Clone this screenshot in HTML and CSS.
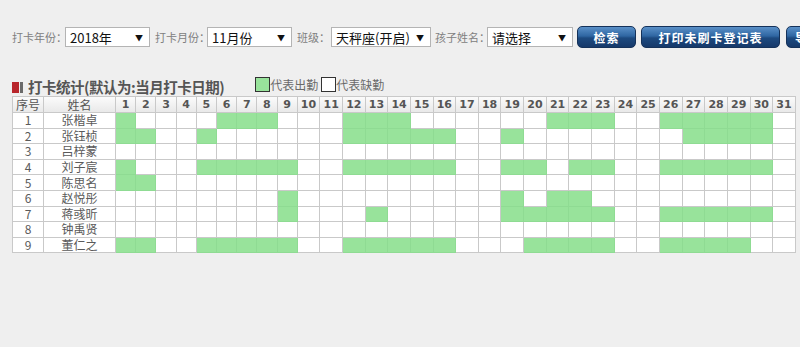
FILE: index.html
```html
<!DOCTYPE html>
<html lang="zh-CN">
<head>
<meta charset="utf-8">
<title>打卡统计</title>
<link rel="stylesheet" href="styles.css">
</head>
<body>
<div class="page">
  <div class="toolbar">
    <span class="lbl l1">打卡年份：</span>
    <div class="sel s1"><span>2018年</span><span class="arr">▼</span></div>
    <span class="lbl l2">打卡月份：</span>
    <div class="sel s2"><span>11月份</span><span class="arr">▼</span></div>
    <span class="lbl l3">班级：</span>
    <div class="sel s3"><span>天秤座(开启)</span><span class="arr">▼</span></div>
    <span class="lbl l4">孩子姓名：</span>
    <div class="sel s4"><span>请选择</span><span class="arr">▼</span></div>
    <button class="btn b1">检索</button>
    <button class="btn b2">打印未刷卡登记表</button>
    <button class="btn b3">导出</button>
  </div>

  <div class="titlebar">
    <span class="ico"><span class="r"></span><span class="d"></span></span>
    <span class="title">打卡统计(默认为:当月打卡日期)</span>
    <span class="legend">
      <span class="box on"></span><span class="lg">代表出勤</span>
      <span class="box off"></span><span class="lg">代表缺勤</span>
    </span>
  </div>

  <table class="grid">
    <colgroup>
      <col class="c-no"><col class="c-name">
      <col class="c-a"><col class="c-a"><col class="c-a"><col class="c-a"><col class="c-a"><col class="c-a"><col class="c-a"><col class="c-a"><col class="c-a">
      <col class="c-b"><col class="c-b"><col class="c-b"><col class="c-b"><col class="c-b"><col class="c-b"><col class="c-b"><col class="c-b"><col class="c-b"><col class="c-b"><col class="c-b"><col class="c-b"><col class="c-b"><col class="c-b"><col class="c-b"><col class="c-b"><col class="c-b"><col class="c-b"><col class="c-b"><col class="c-b"><col class="c-b"><col class="c-b">
    </colgroup>
    <thead>
      <tr>
        <th class="hn">序号</th><th class="hn">姓名</th>
        <th>1</th><th>2</th><th>3</th><th>4</th><th>5</th><th>6</th><th>7</th><th>8</th><th>9</th><th>10</th><th>11</th><th>12</th><th>13</th><th>14</th><th>15</th><th>16</th><th>17</th><th>18</th><th>19</th><th>20</th><th>21</th><th>22</th><th>23</th><th>24</th><th>25</th><th>26</th><th>27</th><th>28</th><th>29</th><th>30</th><th>31</th>
      </tr>
    </thead>
    <tbody>
      <tr><td>1</td><td>张楷卓</td>
        <td class="g"></td><td></td><td></td><td></td><td></td><td class="g"></td><td class="g"></td><td class="g"></td><td></td><td></td>
        <td></td><td class="g"></td><td class="g"></td><td class="g"></td><td></td><td></td><td></td><td></td><td></td><td></td>
        <td class="g"></td><td class="g"></td><td class="g"></td><td></td><td></td><td class="g"></td><td class="g"></td><td class="g"></td><td class="g"></td><td class="g"></td>
        <td></td></tr>
      <tr><td>2</td><td>张钰桢</td>
        <td class="g"></td><td class="g"></td><td></td><td></td><td class="g"></td><td></td><td></td><td></td><td></td><td></td>
        <td></td><td class="g"></td><td class="g"></td><td class="g"></td><td class="g"></td><td class="g"></td><td></td><td></td><td class="g"></td><td></td>
        <td></td><td></td><td></td><td></td><td></td><td></td><td class="g"></td><td class="g"></td><td class="g"></td><td class="g"></td>
        <td></td></tr>
      <tr><td>3</td><td>吕梓蒙</td>
        <td></td><td></td><td></td><td></td><td></td><td></td><td></td><td></td><td></td><td></td>
        <td></td><td></td><td></td><td></td><td></td><td></td><td></td><td></td><td></td><td></td>
        <td></td><td></td><td></td><td></td><td></td><td></td><td></td><td></td><td></td><td></td>
        <td></td></tr>
      <tr><td>4</td><td>刘子宸</td>
        <td class="g"></td><td></td><td></td><td></td><td class="g"></td><td class="g"></td><td class="g"></td><td class="g"></td><td class="g"></td><td></td>
        <td></td><td class="g"></td><td class="g"></td><td class="g"></td><td class="g"></td><td class="g"></td><td></td><td></td><td class="g"></td><td class="g"></td>
        <td></td><td class="g"></td><td class="g"></td><td></td><td></td><td class="g"></td><td class="g"></td><td class="g"></td><td class="g"></td><td class="g"></td>
        <td></td></tr>
      <tr><td>5</td><td>陈思名</td>
        <td class="g"></td><td class="g"></td><td></td><td></td><td></td><td></td><td></td><td></td><td></td><td></td>
        <td></td><td></td><td></td><td></td><td></td><td></td><td></td><td></td><td></td><td></td>
        <td></td><td></td><td></td><td></td><td></td><td></td><td></td><td></td><td></td><td></td>
        <td></td></tr>
      <tr><td>6</td><td>赵悦彤</td>
        <td></td><td></td><td></td><td></td><td></td><td></td><td></td><td></td><td class="g"></td><td></td>
        <td></td><td></td><td></td><td></td><td></td><td></td><td></td><td></td><td class="g"></td><td></td>
        <td class="g"></td><td class="g"></td><td></td><td></td><td></td><td></td><td></td><td></td><td></td><td></td>
        <td></td></tr>
      <tr><td>7</td><td>蒋彧昕</td>
        <td></td><td></td><td></td><td></td><td></td><td></td><td></td><td></td><td class="g"></td><td></td>
        <td></td><td></td><td class="g"></td><td></td><td></td><td></td><td></td><td></td><td class="g"></td><td class="g"></td>
        <td class="g"></td><td class="g"></td><td class="g"></td><td></td><td></td><td class="g"></td><td class="g"></td><td class="g"></td><td class="g"></td><td class="g"></td>
        <td></td></tr>
      <tr><td>8</td><td>钟禹贤</td>
        <td></td><td></td><td></td><td></td><td></td><td></td><td></td><td></td><td></td><td></td>
        <td></td><td></td><td></td><td></td><td></td><td></td><td></td><td></td><td></td><td></td>
        <td></td><td></td><td></td><td></td><td></td><td></td><td></td><td></td><td></td><td></td>
        <td></td></tr>
      <tr><td>9</td><td>董仁之</td>
        <td class="g"></td><td class="g"></td><td></td><td></td><td class="g"></td><td class="g"></td><td class="g"></td><td class="g"></td><td class="g"></td><td></td>
        <td></td><td class="g"></td><td class="g"></td><td class="g"></td><td class="g"></td><td class="g"></td><td></td><td></td><td></td><td class="g"></td>
        <td class="g"></td><td class="g"></td><td class="g"></td><td></td><td></td><td class="g"></td><td class="g"></td><td class="g"></td><td class="g"></td><td></td>
        <td></td></tr>
    </tbody>
  </table>
</div>
</body>
</html>
```
FILE: styles.css
```css
* { box-sizing: border-box; }

body {
  margin: 0;
  background: #efefef;
  font-family: "Noto Sans CJK SC", "Microsoft YaHei", sans-serif;
  color: #555;
  overflow: hidden;
}

.page {
  padding-left: 12px;
}

/* toolbar */
.toolbar {
  display: flex;
  align-items: center;
  height: 22px;
  margin-top: 26px;
  width: 788px;
  overflow: hidden;
  white-space: nowrap;
}

.lbl {
  flex: none;
  font-size: 11px;
  color: #808080;
}
.l1 { width: 53px; }
.l2 { width: 52px; }
.l3 { width: 34px; }
.l4 { width: 52px; }

.sel {
  flex: none;
  display: flex;
  align-items: center;
  justify-content: space-between;
  height: 20px;
  padding: 0 6px 0 4px;
  margin-right: 5px;
  background: #fff;
  border: 1px solid #b4b4b4;
  font-size: 13px;
  color: #111;
}
.sel .arr { font-size: 8px; color: #111; }
.s1 { width: 85px; }
.s2 { width: 85px; }
.s3 { width: 100px; margin-right: 4px; }
.s4 { width: 86px; margin-right: 4px; }

.btn {
  flex: none;
  height: 22px;
  padding: 0;
  border: 1px solid #15325a;
  border-radius: 5px;
  background: linear-gradient(#5a90c8 0%, #2f66a2 45%, #1d4a80 55%, #16396a 100%);
  color: #fff;
  font-family: "Noto Sans CJK SC", sans-serif;
  font-size: 12px;
  font-weight: bold;
  letter-spacing: 1px;
  margin-right: 5px;
}
.b1 { width: 59px; }
.b2 { width: 139px; margin-right: 6px; }
.b3 { width: 60px; text-align: left; padding-left: 8px; }

/* title */
.titlebar {
  display: flex;
  align-items: center;
  height: 20px;
  margin-top: 28px;
}
.ico {
  display: flex;
  gap: 1px;
  margin-top: 3px;
}
.ico .r { width: 7px; height: 11px; background: #b8262c; }
.ico .d { width: 3px; height: 11px; background: #6a6a6a; }

.title {
  margin-left: 5px;
  font-size: 14.5px;
  font-weight: bold;
  color: #555;
  letter-spacing: -0.5px;
}

.legend {
  display: flex;
  align-items: center;
  margin-left: 31px;
  margin-top: -3px;
  font-size: 12px;
  color: #6a6a6a;
}
.box {
  width: 15px;
  height: 15px;
  border: 1px solid #333;
  background: #fff;
}
.box.on { background: #98e39b; }
.lg { margin-right: 3px; }

/* grid */
.grid {
  border-collapse: separate;
  border-spacing: 0;
  table-layout: fixed;
  width: 783px;
  border-left: 1px solid #c9c9c9;
  border-top: 1px solid #c9c9c9;
  background: #fff;
}
.c-no { width: 31px; }
.c-name { width: 72px; }
.c-a { width: 20.2px; }
.c-b { width: 22.65px; }

.grid th,
.grid td {
  padding: 0;
  border-right: 1px solid #c9c9c9;
  border-bottom: 1px solid #c9c9c9;
  text-align: center;
  white-space: nowrap;
}

.grid th {
  height: 16px;
  background: linear-gradient(#fbfbfb, #e9e9e9);
  font-family: "DejaVu Sans", sans-serif;
  font-size: 11px;
  font-weight: bold;
  color: #555;
  line-height: 14px;
}
.grid th.hn {
  font-family: "Noto Sans CJK SC", sans-serif;
  font-size: 12px;
  font-weight: normal;
  color: #555;
}

.grid td {
  height: 15.6px;
  font-size: 12px;
  line-height: 14px;
  color: #5a5a5a;
}

.grid td.g {
  background: #98e39b;
  border-color: #8fdb93;
}
```
